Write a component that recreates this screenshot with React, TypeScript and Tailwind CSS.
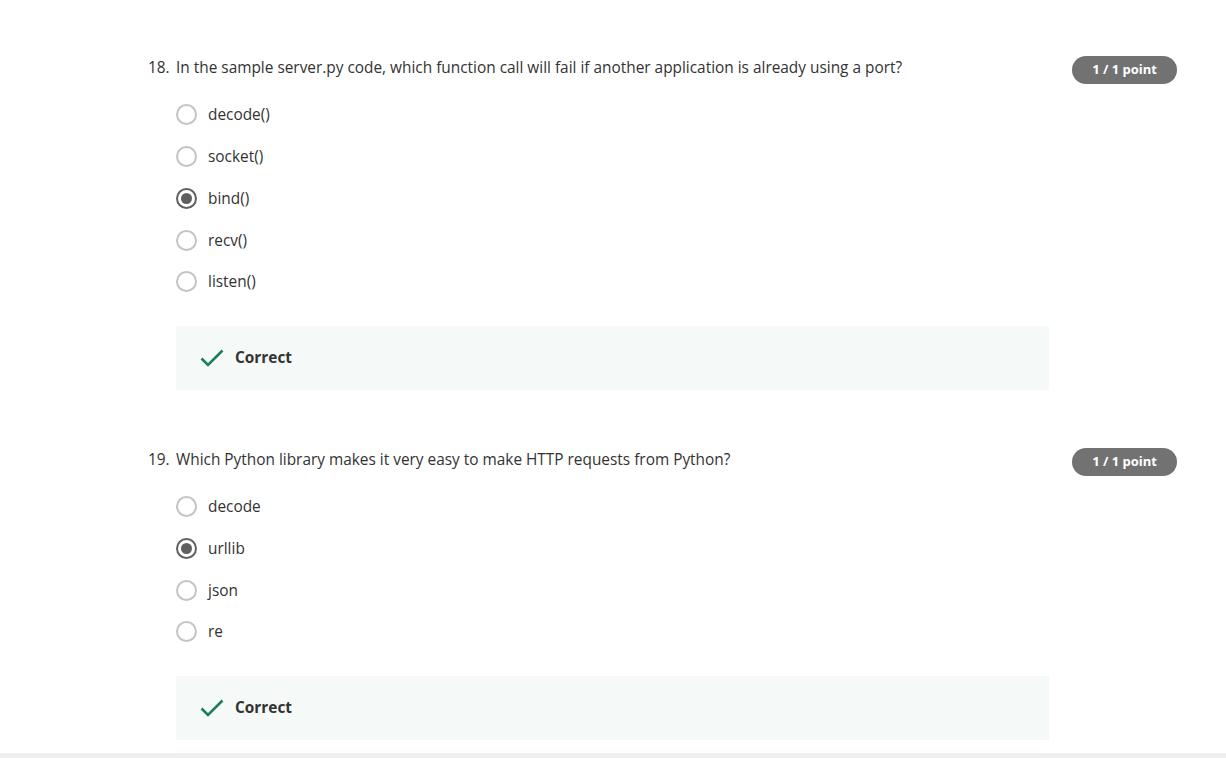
const questions = [
  {
    num: "18.",
    text: "In the sample server.py code, which function call will fail if another application is already using a port?",
    options: ["decode()", "socket()", "bind()", "recv()", "listen()"],
    selected: 2,
  },
  {
    num: "19.",
    text: "Which Python library makes it very easy to make HTTP requests from Python?",
    options: ["decode", "urllib", "json", "re"],
    selected: 1,
  },
];

const Radio = ({ checked }: { checked: boolean }) =>
  checked ? (
    <span className="flex h-[21px] w-[21px] items-center justify-center rounded-full border-2 border-[#5f5f5f]">
      <span className="h-[11px] w-[11px] rounded-full bg-[#5f5f5f]" />
    </span>
  ) : (
    <span className="h-[21px] w-[21px] rounded-full border-2 border-[#c4c4c4]" />
  );

const CheckIcon = () => (
  <svg width="24" height="18" viewBox="0 0 24 18" fill="none">
    <path d="M1.5 9.5 L8 16 L22.5 1.5" stroke="#1a7f57" strokeWidth="2.6" />
  </svg>
);

export default function App() {
  return (
    <div className="flex h-[758px] flex-col bg-white font-['Open_Sans',sans-serif] text-[#333]">
      <div className="flex-1 pl-[148px] pr-[49px] pt-[56px]">
        {questions.map((q, i) => (
          <section key={q.num} className={i > 0 ? "mt-[58px]" : ""}>
            <div className="flex items-start justify-between">
              <div className="flex text-[15.4px] leading-6">
                <span className="w-[28px]">{q.num}</span>
                <span>{q.text}</span>
              </div>
              <span className="flex h-7 items-center rounded-full bg-[#727272] px-[20px] text-[13px] font-bold text-white">
                1 / 1 point
              </span>
            </div>
            <div className="ml-[28px] mt-[10px] w-[873px]">
              {q.options.map((opt, j) => (
                <label key={opt} className="flex h-[41.75px] items-center gap-[11px]">
                  <Radio checked={j === q.selected} />
                  <span className="text-[15.4px]">{opt}</span>
                </label>
              ))}
              <div className="mt-[23px] flex h-16 items-center gap-[11px] bg-[#f5f9f8] pl-[24px]">
                <CheckIcon />
                <span className="text-[15.4px] font-bold text-[#333]">Correct</span>
              </div>
            </div>
          </section>
        ))}
      </div>
      <div className="h-[5px] bg-[#efefef]" />
    </div>
  );
}
